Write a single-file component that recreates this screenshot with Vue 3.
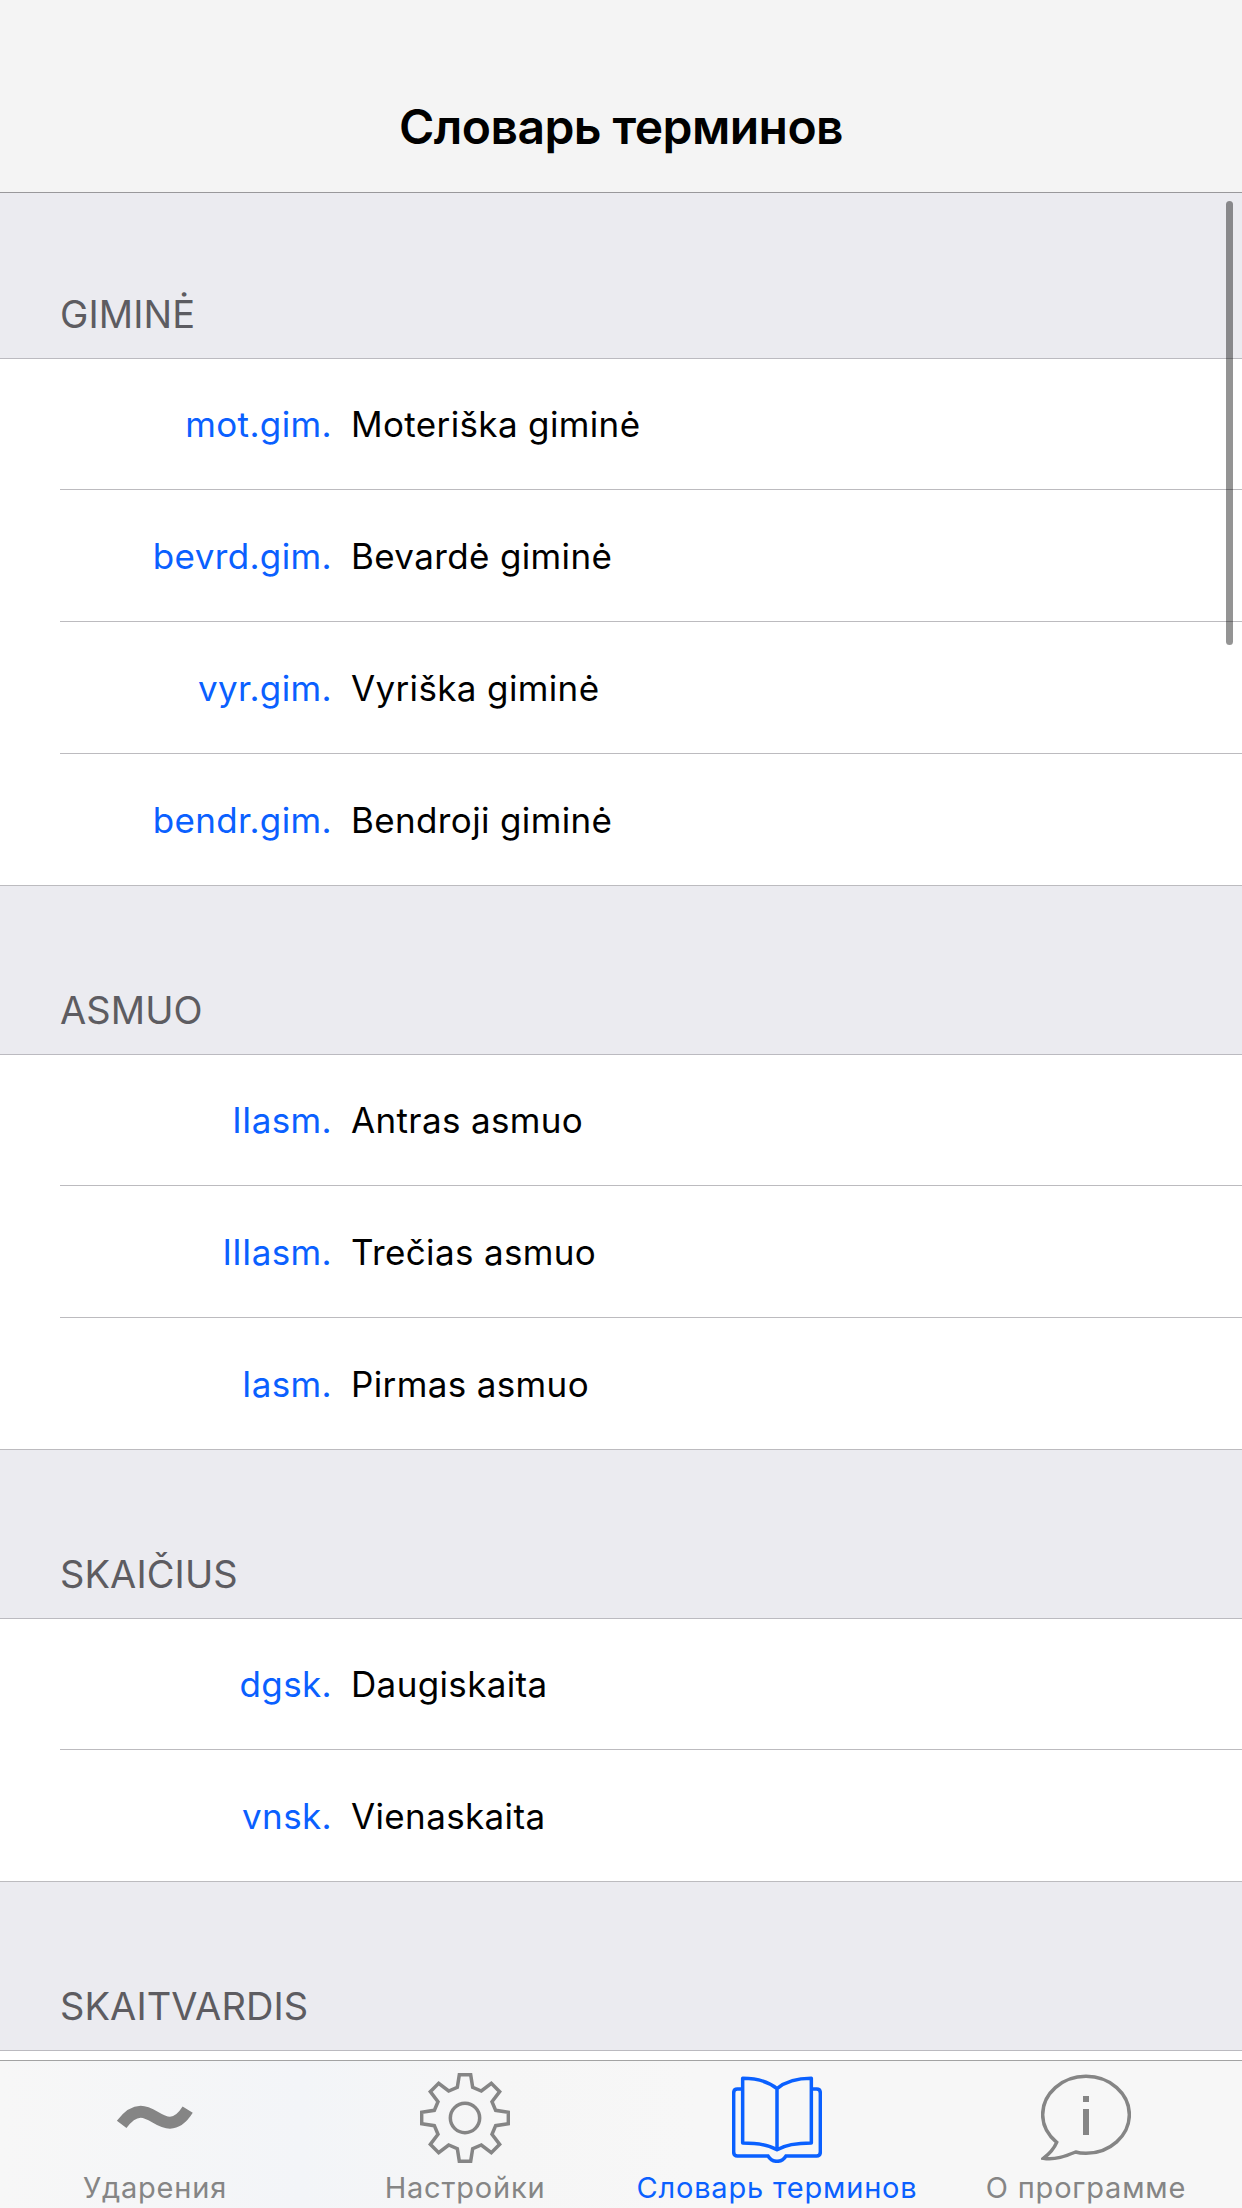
<script setup>
const sections = [
  {
    title: 'GIMINĖ',
    rows: [
      ['mot.gim.', 'Moteriška giminė'],
      ['bevrd.gim.', 'Bevardė giminė'],
      ['vyr.gim.', 'Vyriška giminė'],
      ['bendr.gim.', 'Bendroji giminė'],
    ],
  },
  {
    title: 'ASMUO',
    rows: [
      ['IIasm.', 'Antras asmuo'],
      ['IIIasm.', 'Trečias asmuo'],
      ['Iasm.', 'Pirmas asmuo'],
    ],
  },
  {
    title: 'SKAIČIUS',
    rows: [
      ['dgsk.', 'Daugiskaita'],
      ['vnsk.', 'Vienaskaita'],
    ],
  },
  { title: 'SKAITVARDIS', rows: [] },
]
</script>

<template>
  <div class="screen">
    <header class="nav"><h1>Словарь терминов</h1></header>

    <main class="list">
      <section v-for="s in sections" :key="s.title">
        <h2>{{ s.title }}</h2>
        <div v-for="r in s.rows" :key="r[0]" class="row">
          <span class="abbr">{{ r[0] }}</span>
          <span class="term">{{ r[1] }}</span>
        </div>
      </section>
      <div class="scrollbar"></div>
    </main>

    <nav class="tabs">
      <div class="tab">
        <svg viewBox="0 0 270 270">
          <path d="M35 154C53 130 73 116 92 116C125 116 146 149 180 149C203 149 218 134 233 110" stroke-width="36" />
        </svg>
        <span>Ударения</span>
      </div>
      <div class="tab">
        <svg viewBox="0 0 270 270">
          <path d="M118 5H152L158 43L184 54L214 31L239 56L216 86L227 112L265 118V152L227 158L216 184L239 214L214 239L184 216L158 227L152 265H118L112 227L86 216L56 239L31 214L54 184L43 158L5 152V118L43 112L54 86L31 56L56 31L86 54L112 43Z" />
          <circle cx="135" cy="135" r="44" />
        </svg>
        <span>Настройки</span>
      </div>
      <div class="tab active">
        <svg viewBox="0 0 270 270">
          <path d="M135 47Q98 16 32 16V210Q100 210 135 230Q170 210 238 210V16Q172 16 135 47V230" stroke-linejoin="round" />
          <path d="M32 48H16Q5 48 5 60V237Q5 249 16 249H108Q118 265 135 265Q152 265 162 249H254Q265 249 265 237V60Q265 48 254 48H238" />
        </svg>
        <span>Словарь терминов</span>
      </div>
      <div class="tab">
        <svg viewBox="0 0 270 270">
          <path d="M47 208C20 185 5 156 5 125C5 62 63 10 135 10S265 62 265 125S207 241 135 241C124 241 113 240 104 237C75 249 42 262 7 256C28 240 40 225 47 208Z" />
          <path d="M135 69V87M135 108V186" stroke-width="18" />
        </svg>
        <span>О программе</span>
      </div>
    </nav>
  </div>
</template>

<style>
body {
  margin: 0;
}
</style>

<style scoped>
.screen {
  width: 1242px;
  height: 2208px;
  display: flex;
  flex-direction: column;
  overflow: hidden;
  background: #fff;
  font-family: Inter, "Liberation Sans", sans-serif;
}
.nav {
  flex: none;
  box-sizing: border-box;
  height: 193px;
  padding-top: 97px;
  background: #f4f4f4;
  border-bottom: 1px solid #99989b;
  text-align: center;
}
h1 {
  margin: 0;
  font-size: 48px;
  line-height: 60px;
  font-weight: 600;
  letter-spacing: -0.55px;
}
.list {
  position: relative;
  flex: 1;
  min-height: 0;
  overflow: hidden;
}
h2 {
  box-sizing: border-box;
  height: 169px;
  margin: 0;
  padding: 0 0 21px 60px;
  display: flex;
  align-items: flex-end;
  background: #ebebf0;
  border-bottom: 1px solid #bbbac0;
  color: #5d5c61;
  font-size: 38px;
  line-height: 46px;
  font-weight: 400;
  letter-spacing: 0.1px;
}
section:first-child h2 {
  height: 166px;
}
.row {
  position: relative;
  box-sizing: border-box;
  height: 132px;
  display: flex;
  align-items: center;
  gap: 19px;
  font-size: 35px;
  line-height: 44px;
  letter-spacing: 0.36px;
}
h2 + .row {
  height: 131px;
  padding-bottom: 1px;
}
.row::after {
  content: "";
  position: absolute;
  left: 60px;
  right: 0;
  bottom: 0;
  height: 1px;
  background: #bcbbbf;
}
.row:last-child::after {
  left: 0;
}
.abbr {
  width: 332px;
  text-align: right;
  color: #0a60ff;
}
.term {
  color: #000;
}
.scrollbar {
  position: absolute;
  top: 8px;
  right: 9px;
  width: 7px;
  height: 444px;
  border-radius: 4px;
  background: rgba(0, 0, 0, 0.42);
}
.tabs {
  flex: none;
  box-sizing: border-box;
  height: 148px;
  padding-top: 12px;
  display: grid;
  grid-template-columns: 310px 310px 314px 304px;
  background: linear-gradient(90deg, #f7f7f7 0, #f3f5f8 300px, #f6f6f6 500px, #f7f7f7 700px);
  border-top: 1px solid #a3a3a3;
}
.tab {
  display: flex;
  flex-direction: column;
  align-items: center;
  color: #858585;
  font-size: 29px;
  line-height: 36px;
  letter-spacing: 0.8px;
  white-space: nowrap;
}
.active {
  color: #0a60ff;
}
svg {
  display: block;
  width: 90px;
  height: 90px;
  margin-bottom: 7px;
  fill: none;
  stroke: currentColor;
  stroke-width: 10.5;
}
</style>
